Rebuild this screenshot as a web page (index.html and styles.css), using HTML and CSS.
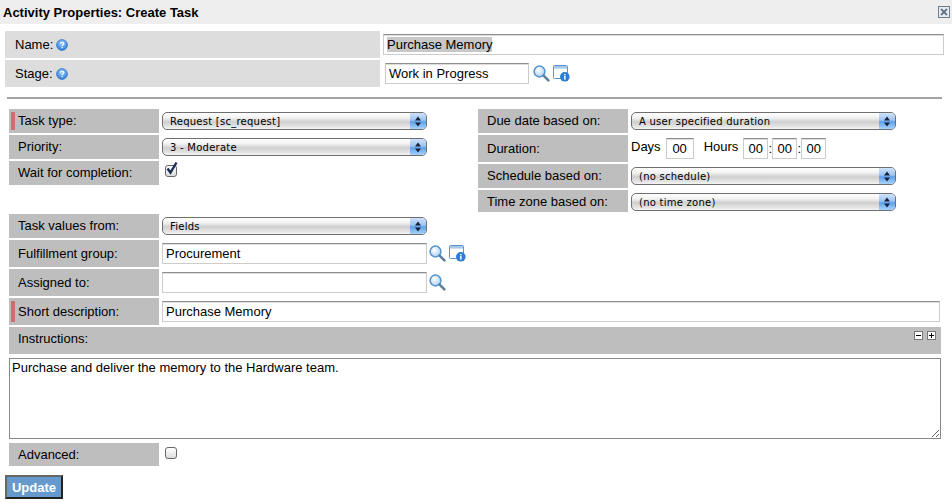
FILE: index.html
```html
<!DOCTYPE html>
<html lang="en">
<head>
  <meta charset="UTF-8" />
  <title>Activity Properties: Create Task</title>
  <link rel="stylesheet" href="styles.css">
</head>
<body>
  <svg class="defs" width="0" height="0">
    <defs>
      <radialGradient id="helpFill" cx="50%" cy="35%" r="70%">
        <stop offset="0" stop-color="#a9d4fb"/>
        <stop offset="1" stop-color="#1b6fd6"/>
      </radialGradient>
      <radialGradient id="lensFill" cx="40%" cy="35%" r="70%">
        <stop offset="0" stop-color="#ffffff"/>
        <stop offset="1" stop-color="#a9cdf0"/>
      </radialGradient>
      <symbol id="help" viewBox="0 0 12 12">
        <circle cx="6" cy="6" r="5.4" fill="url(#helpFill)" stroke="#2f78c8" stroke-width=".8"/>
        <path d="M4.3 4.8C4.4 3.6 5.2 3.2 6.1 3.2c1 0 1.7.6 1.7 1.4 0 1.3-1.7 1.2-1.7 2.6" fill="none" stroke="#fff" stroke-width="1.1"/>
        <rect x="5.5" y="8" width="1.2" height="1.2" fill="#fff"/>
      </symbol>
      <symbol id="lens" viewBox="0 0 17 17">
        <circle cx="6.5" cy="6.5" r="5.4" fill="url(#lensFill)" stroke="#4f93cf" stroke-width="1.5"/>
        <path d="M10.6 10.6L15.4 15.4" stroke="#5e7f9e" stroke-width="2.6" stroke-linecap="round"/>
      </symbol>
      <symbol id="info" viewBox="0 0 17 17">
        <rect x=".5" y=".5" width="14" height="13" rx="1" fill="#fff" stroke="#5b93cf"/>
        <rect x="1" y="1" width="13" height="2.6" fill="#a8c8ea"/>
        <circle cx="11.8" cy="11.8" r="4.8" fill="#2b7ed2"/>
        <rect x="11.1" y="9" width="1.5" height="1.4" fill="#fff"/>
        <rect x="11.1" y="11" width="1.5" height="3.6" fill="#fff"/>
      </symbol>
      <symbol id="arrows" viewBox="0 0 16 17">
        <path d="M8 3.5L11 7.5H5ZM8 13.5L5 9.5H11Z" fill="#17233a"/>
      </symbol>
    </defs>
  </svg>

  <div class="title-bar">
    <span>Activity Properties: Create Task</span>
    <span class="close-box">
      <svg width="12" height="12" viewBox="0 0 12 12"><rect x=".5" y=".5" width="11" height="11" fill="#e8ecef" stroke="#6d7f8e"/><path d="M3 3L9 9M9 3L3 9" stroke="#5f7486" stroke-width="1.8"/></svg>
    </span>
  </div>

  <div class="top-section">
    <div class="top-row">
      <div class="top-label">Name: <svg class="help-icon"><use href="#help"/></svg></div>
      <div class="text-box name-box"><span class="picked">Purchase Memory</span></div>
    </div>
    <div class="top-row">
      <div class="top-label">Stage: <svg class="help-icon"><use href="#help"/></svg></div>
      <div class="text-box stage-box">Work in Progress</div>
      <svg class="lens-icon stage-lens"><use href="#lens"/></svg>
      <svg class="info-icon"><use href="#info"/></svg>
    </div>
  </div>

  <hr class="rule">

  <div class="columns">
    <div class="column left-col">
      <div class="row h24 gap-below">
        <div class="label required">Task type:</div>
        <div class="select"><span class="select-text">Request [sc_request]</span><span class="select-arrow"><svg width="16" height="17"><use href="#arrows"/></svg></span></div>
      </div>
      <div class="row h24 gap-below">
        <div class="label">Priority:</div>
        <div class="select"><span class="select-text">3 - Moderate</span><span class="select-arrow"><svg width="16" height="17"><use href="#arrows"/></svg></span></div>
      </div>
      <div class="row h24">
        <div class="label">Wait for completion:</div>
        <span class="checkbox">
          <svg class="tick" width="14" height="15" viewBox="0 0 14 15"><path d="M2.5 7.5L5.5 11.5L11.5 1.5" fill="none" stroke="#1c2f55" stroke-width="2.4"/></svg>
        </span>
      </div>
    </div>
    <div class="column right-col">
      <div class="row h24 gap-below">
        <div class="label">Due date based on:</div>
        <div class="select"><span class="select-text">A user specified duration</span><span class="select-arrow"><svg width="16" height="17"><use href="#arrows"/></svg></span></div>
      </div>
      <div class="row h27 gap-below">
        <div class="label">Duration:</div>
        <div class="duration">
          <span class="unit">Days</span><span class="text-box mini days">00</span>
          <span class="unit hours">Hours</span><span class="text-box mini">00</span><span class="colon">:</span><span class="text-box mini">00</span><span class="colon">:</span><span class="text-box mini">00</span>
        </div>
      </div>
      <div class="row h24 gap-below">
        <div class="label">Schedule based on:</div>
        <div class="select"><span class="select-text">(no schedule)</span><span class="select-arrow"><svg width="16" height="17"><use href="#arrows"/></svg></span></div>
      </div>
      <div class="row h22">
        <div class="label">Time zone based on:</div>
        <div class="select low"><span class="select-text">(no time zone)</span><span class="select-arrow"><svg width="16" height="17"><use href="#arrows"/></svg></span></div>
      </div>
    </div>
  </div>

  <div class="task-values">
    <div class="row h24 gap-below">
      <div class="label">Task values from:</div>
      <div class="select"><span class="select-text">Fields</span><span class="select-arrow"><svg width="16" height="17"><use href="#arrows"/></svg></span></div>
    </div>
    <div class="row h27 gap-below">
      <div class="label">Fulfillment group:</div>
      <div class="text-box ref-box">Procurement</div>
      <svg class="lens-icon"><use href="#lens"/></svg>
      <svg class="info-icon"><use href="#info"/></svg>
    </div>
    <div class="row h27 gap-below">
      <div class="label">Assigned to:</div>
      <div class="text-box ref-box"></div>
      <svg class="lens-icon"><use href="#lens"/></svg>
    </div>
    <div class="row h27 gap-below">
      <div class="label required">Short description:</div>
      <div class="text-box short-box">Purchase Memory</div>
    </div>
    <div class="instructions-bar">
      <span>Instructions:</span>
      <span class="size-btns">
        <svg width="9" height="9" viewBox="0 0 9 9"><rect x=".5" y=".5" width="8" height="8" fill="#fff" stroke="#777"/><path d="M2 4.5H7" stroke="#000"/></svg>
        <svg width="9" height="9" viewBox="0 0 9 9"><rect x=".5" y=".5" width="8" height="8" fill="#fff" stroke="#777"/><path d="M2 4.5H7M4.5 2V7" stroke="#000"/></svg>
      </span>
    </div>
    <textarea class="instructions" readonly>Purchase and deliver the memory to the Hardware team.</textarea>
    <div class="row h23 advanced">
      <div class="label">Advanced:</div>
      <span class="checkbox"></span>
    </div>
  </div>

  <button class="update-btn">Update</button>
</body>
</html>
```

FILE: styles.css
```css
* {
  box-sizing: border-box;
}
html, body {
  height: 503px;
  overflow: hidden;
}
body {
  margin: 0;
  background: #fff;
  color: #000;
  font-family: "Liberation Sans", Arial, sans-serif;
  font-size: 13px;
}
.defs {
  position: absolute;
}
.title-bar {
  display: flex;
  justify-content: space-between;
  align-items: center;
  height: 24px;
  padding: 0 2px 0 3px;
  background: #eee;
  font-weight: bold;
  font-size: 13px;
}
.close-box {
  display: flex;
}
.top-section {
  margin-top: 7px;
  padding-left: 5px;
}
.top-row {
  display: flex;
  align-items: center;
  height: 27px;
  margin-bottom: 2px;
}
.top-label {
  display: flex;
  align-items: center;
  gap: 3px;
  width: 375px;
  height: 27px;
  margin-right: 3px;
  padding-left: 10px;
  background: #ddd;
}
.help-icon {
  width: 12px;
  height: 12px;
}
.text-box {
  display: flex;
  align-items: center;
  height: 21px;
  padding: 0 3px;
  background: #fff;
  border: 1px solid #ccc;
  border-top-color: #8e8e8e;
  box-shadow: inset 0 1px 0 #ddd;
  color: #000;
}
.name-box {
  width: 561px;
}
.picked {
  background: #c8c8c8;
}
.stage-box {
  width: 144px;
  margin-left: 2px;
}
.lens-icon {
  width: 17px;
  height: 17px;
  margin-left: 2px;
}
.stage-lens {
  margin-left: 4px;
}
.info-icon {
  width: 17px;
  height: 17px;
  margin-left: 3px;
}
.rule {
  height: 2px;
  margin: 10px 10px 10px 7px;
  background: #a3a3a3;
  border: 0;
}
.columns {
  display: flex;
  height: 105px;
  padding-left: 9px;
}
.left-col {
  width: 469px;
}
.row {
  display: flex;
  align-items: center;
}
.h22 { height: 22px; }
.h23 { height: 23px; }
.h24 { height: 24px; }
.h27 { height: 27px; }
.gap-below {
  margin-bottom: 2px;
}
.label {
  align-self: stretch;
  display: flex;
  align-items: center;
  flex: none;
  width: 150px;
  margin-right: 3px;
  padding-left: 9px;
  background: #bebebe;
}
.h24 .label {
  padding-bottom: 2px;
}
.required {
  position: relative;
}
.required::before {
  content: "";
  position: absolute;
  left: 2px;
  top: 3px;
  bottom: 3px;
  width: 4px;
  background: #cc6f70;
}
.select {
  display: flex;
  width: 265px;
  height: 18px;
  overflow: hidden;
  background: linear-gradient(#fff, #f2f2f2 30%, #cfcfcf 55%, #e4e4e4 85%, #f5f5f5);
  border: 1px solid #6f6f6f;
  border-radius: 5px;
  font-family: "DejaVu Sans", sans-serif;
  font-size: 10px;
}
.select.low {
  margin-top: 2px;
}
.select-text {
  flex: 1;
  padding-left: 7px;
  line-height: 18px;
  letter-spacing: .25px;
}
.select-arrow {
  display: flex;
  align-items: center;
  width: 16px;
  background: linear-gradient(#cfe2fb, #9cc3f2 45%, #5c9fec 55%, #a9d4fb);
}
.checkbox {
  position: relative;
  align-self: flex-start;
  width: 12px;
  height: 12px;
  margin: 4px 0 0 3px;
  background: linear-gradient(#fff, #ddd);
  border: 1px solid #666;
  border-radius: 3px;
}
.tick {
  position: absolute;
  left: -1px;
  top: -5px;
}
.duration {
  display: flex;
  align-items: center;
  height: 100%;
}
.unit {
  padding-bottom: 4px;
}
.mini {
  justify-content: center;
  width: 25px;
  padding: 0;
}
.days {
  width: 28px;
  margin-left: 5px;
}
.hours {
  margin-left: 10px;
  margin-right: 5px;
}
.colon {
  width: 4px;
  text-align: center;
}
.task-values {
  padding-left: 9px;
}
.ref-box {
  width: 265px;
}
.short-box {
  width: 778px;
}
.instructions-bar {
  display: flex;
  justify-content: space-between;
  width: 932px;
  height: 27px;
  padding: 4px 5px 0 9px;
  background: #bebebe;
}
.size-btns {
  display: flex;
  gap: 4px;
}
.instructions {
  display: block;
  width: 932px;
  height: 81px;
  margin: 4px 0;
  padding: 1px 2px;
  border: 1px solid #888;
  border-radius: 0;
  outline: none;
  color: #000;
  font-family: "Liberation Sans", Arial, sans-serif;
  font-size: 13px;
}
.update-btn {
  display: block;
  width: 58px;
  height: 24px;
  margin: 9px 0 0 5px;
  padding: 0;
  background: #6699cc;
  border: 2px solid;
  border-color: #666 #222 #222 #666;
  color: #fff;
  font-family: "Liberation Sans", Arial, sans-serif;
  font-size: 13px;
  font-weight: bold;
}
```
